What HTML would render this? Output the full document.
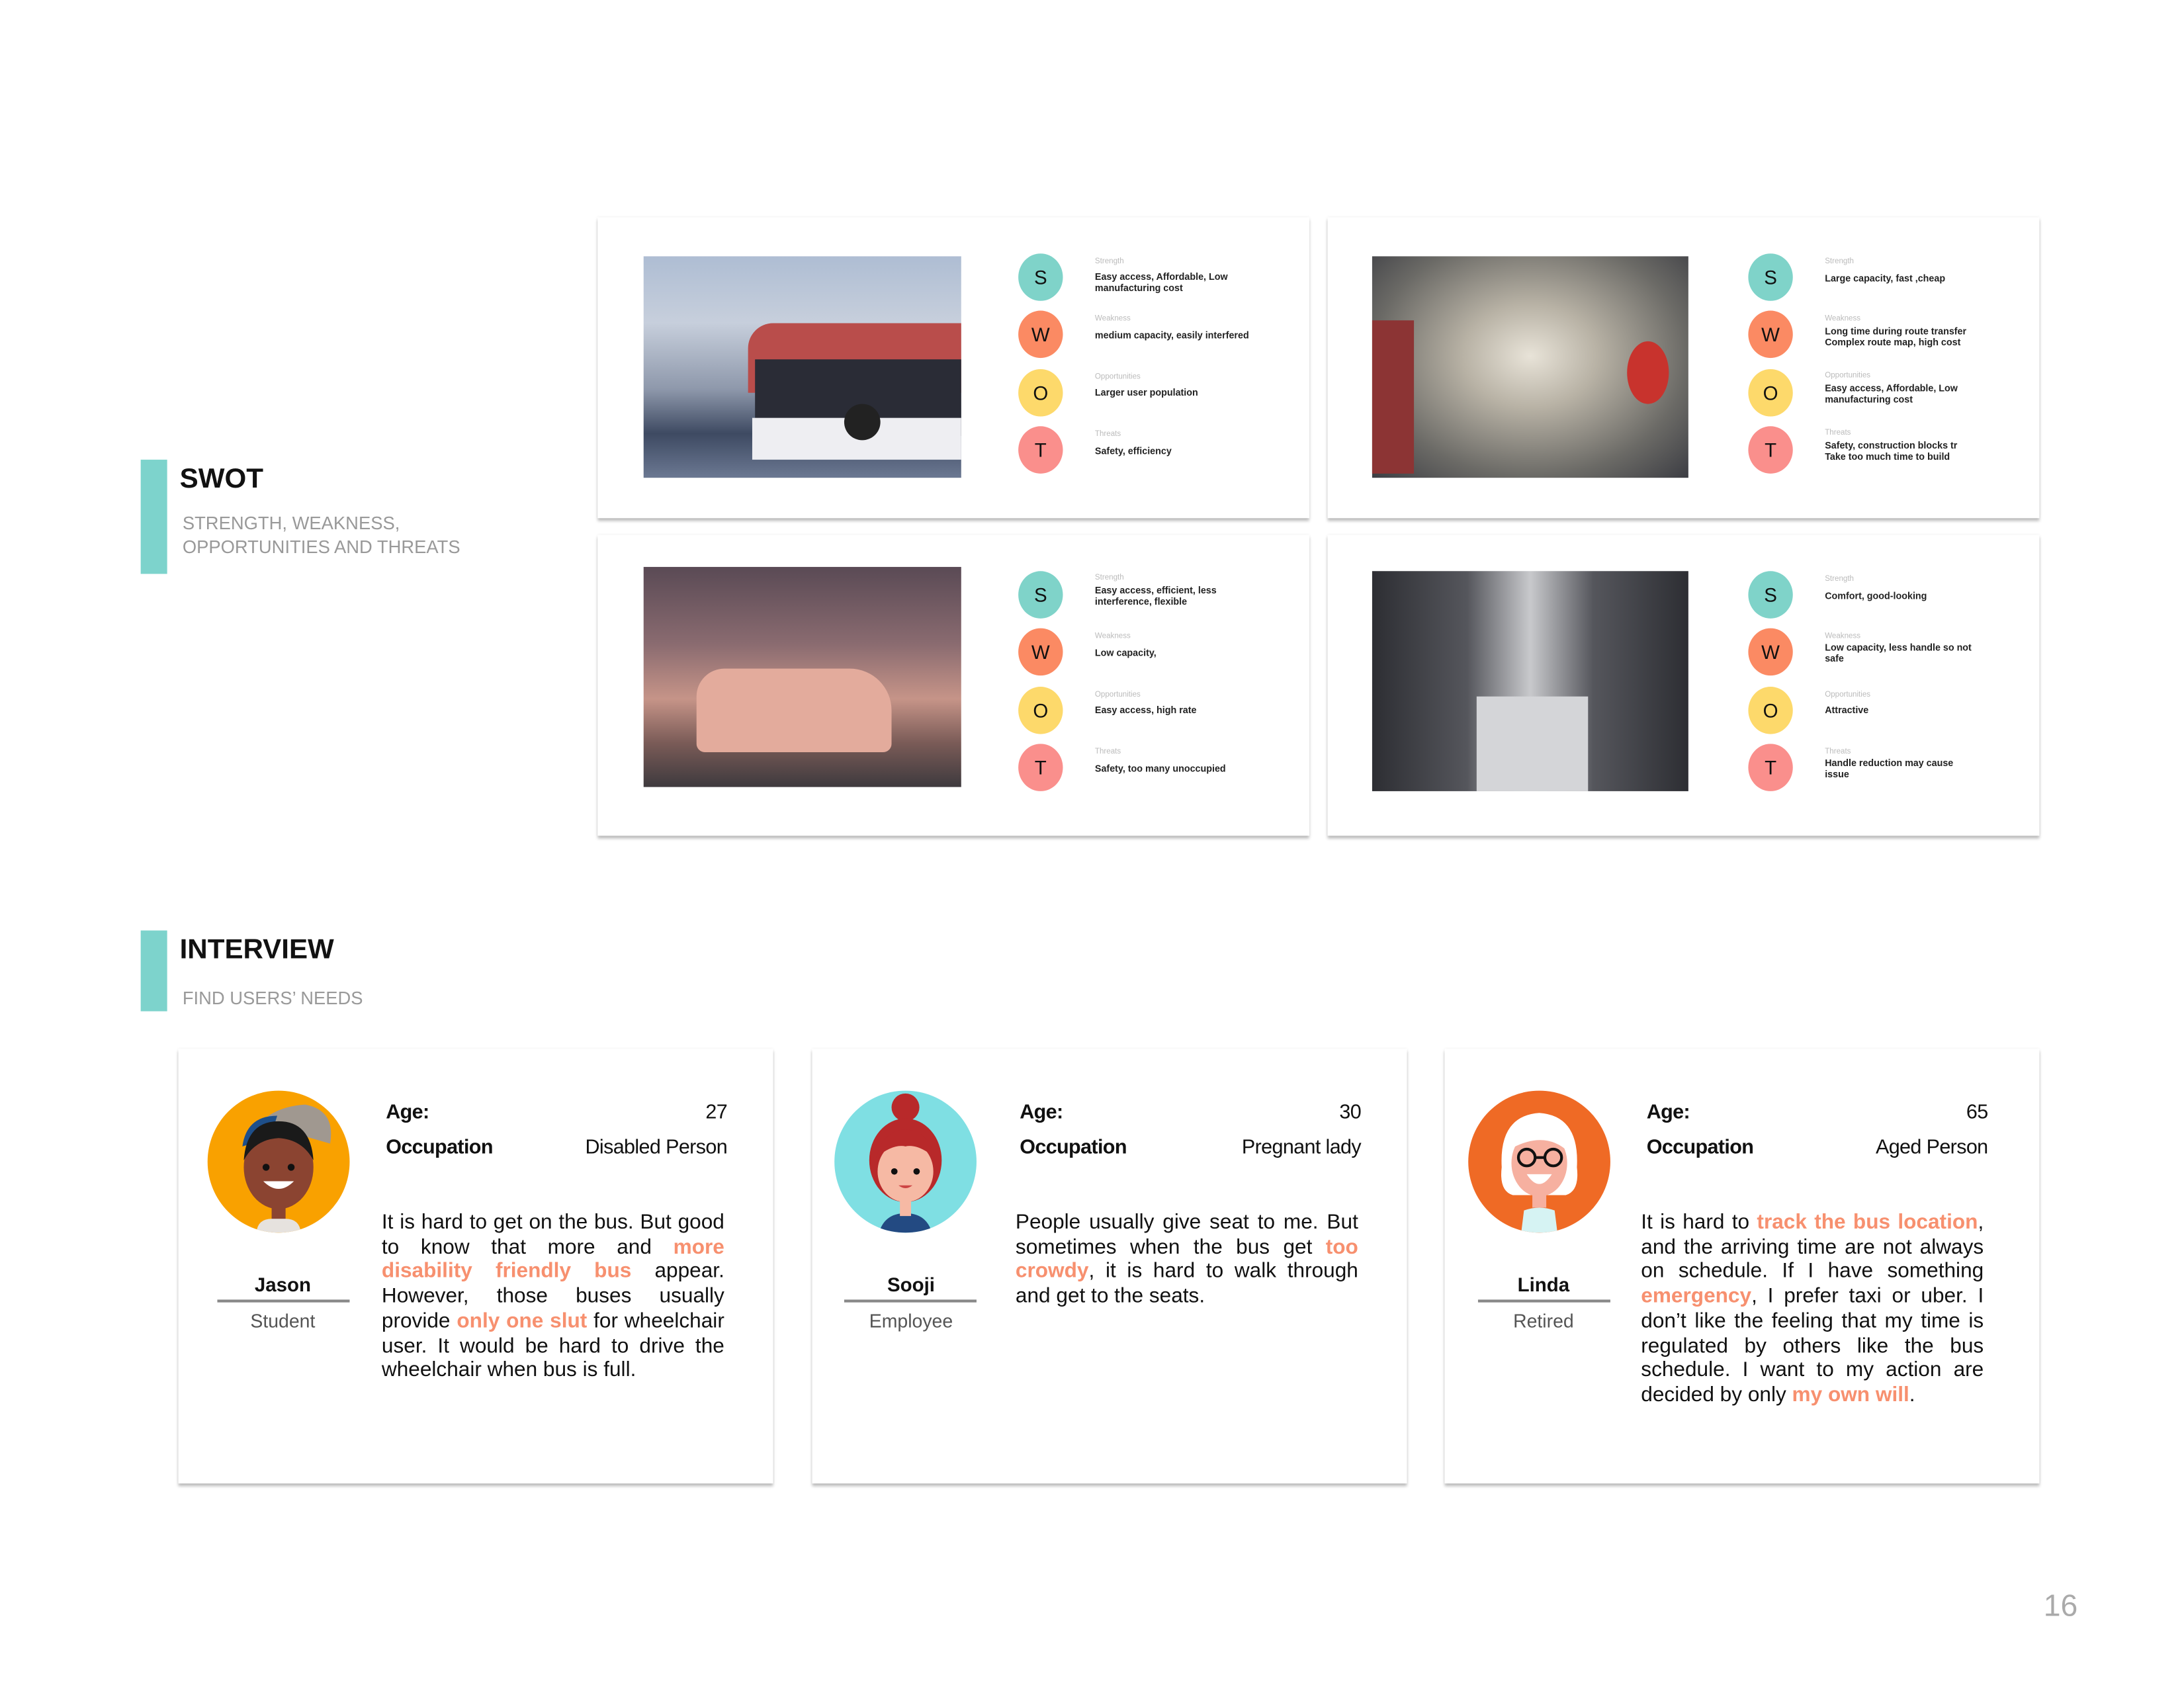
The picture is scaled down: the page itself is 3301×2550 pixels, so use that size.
<!DOCTYPE html>
<html><head><meta charset="utf-8"><style>
html,body{margin:0;padding:0;background:#fff;}
body{width:3301px;height:2550px;overflow:hidden;position:relative;}
#w{position:absolute;left:0;top:0;width:1568px;height:1211px;transform:scale(2.1055);transform-origin:0 0;font-family:"Liberation Sans",sans-serif;}
.a{position:absolute;}
.bar{position:absolute;width:19px;background:#7dd3cc;}
.h{position:absolute;font-weight:bold;font-size:20px;color:#111;}
.sub{position:absolute;font-size:13px;color:#999;line-height:17px;}
.card{position:absolute;background:#fff;box-shadow:0 2px 2px rgba(0,0,0,.25),0 0 2px rgba(0,0,0,.08);}
.c{position:absolute;width:32px;height:34px;border-radius:50%;font-size:14px;text-align:center;line-height:34px;color:#111;}
.lb{position:absolute;font-size:5.5px;color:#bbb;}
.tx{position:absolute;font-size:6.8px;font-weight:bold;color:#222;line-height:8px;}
.av{position:absolute;width:102px;height:102px;border-radius:50%;overflow:hidden;}
.nm{position:absolute;width:96px;text-align:center;font-weight:bold;font-size:14px;color:#111;}
.ln{position:absolute;width:95px;height:2px;background:#888;}
.ro{position:absolute;width:96px;text-align:center;font-size:13.5px;color:#555;}
.k{position:absolute;font-weight:bold;font-size:14.5px;color:#111;letter-spacing:-0.3px;}
.v{position:absolute;font-size:14.5px;color:#111;text-align:right;letter-spacing:-0.3px;}
.p{position:absolute;width:246px;font-size:15px;line-height:17.7px;color:#111;text-align:justify;}
.o{color:#f7906f;font-weight:bold;}
</style></head><body><div id="w">

<div class="bar" style="left:101px;top:330px;height:82px"></div>
<div class="h" style="left:129px;top:333px">SWOT</div>
<div class="sub" style="left:131px;top:367px">STRENGTH, WEAKNESS,<br>OPPORTUNITIES AND THREATS</div>

<div class="card" style="left:429px;top:156px;width:511px;height:216px"></div>
<div class="a" style="left:462px;top:184px;width:228px;height:159px;background:linear-gradient(180deg,#aebdd3 0%,#c7cfdc 30%,#8e98ab 60%,#3e4a62 80%,#6b7892 100%)"></div>
<div class="a" style="left:537px;top:232px;width:153px;height:50px;background:#b94d4b;border-radius:18px 0 0 0"></div>
<div class="a" style="left:542px;top:258px;width:148px;height:55px;background:#2a2c36"></div>
<div class="a" style="left:540px;top:300px;width:150px;height:30px;background:#eeeef2"></div>
<div class="a" style="left:606px;top:290px;width:26px;height:26px;border-radius:50%;background:#222"></div>
<div class="card" style="left:953px;top:156px;width:511px;height:216px"></div>
<div class="a" style="left:985px;top:184px;width:227px;height:159px;background:radial-gradient(ellipse at 50% 45%,#e8e3d8 0%,#b8b2a5 30%,#6b6a66 70%,#3c3d43 100%)"></div>
<div class="a" style="left:985px;top:230px;width:30px;height:110px;background:#8c3434"></div>
<div class="a" style="left:1168px;top:245px;width:30px;height:45px;border-radius:50%;background:#c8332d"></div>
<div class="card" style="left:429px;top:384px;width:511px;height:216px"></div>
<div class="a" style="left:462px;top:407px;width:228px;height:158px;background:linear-gradient(180deg,#5a4a55 0%,#8a6b70 35%,#c69488 60%,#7a5b57 80%,#3e3a3e 100%)"></div>
<div class="a" style="left:500px;top:480px;width:140px;height:60px;border-radius:20px 30px 6px 6px;background:#e3ab9c"></div>
<div class="card" style="left:953px;top:384px;width:511px;height:216px"></div>
<div class="a" style="left:985px;top:410px;width:227px;height:158px;background:linear-gradient(90deg,#2d2e33 0%,#55565c 30%,#c8c9cc 50%,#55565c 70%,#2d2e33 100%)"></div>
<div class="a" style="left:1060px;top:500px;width:80px;height:68px;background:#d4d5d8"></div>

<div class="c" style="left:731px;top:182px;background:#7fd3c9">S</div>
<div class="c" style="left:731px;top:223px;background:#fb8a63">W</div>
<div class="c" style="left:731px;top:265px;background:#fdd96b">O</div>
<div class="c" style="left:731px;top:306px;background:#fa8f8c">T</div>
<div class="lb" style="left:786px;top:185px">Strength</div>
<div class="tx" style="left:786px;top:196px">Easy access, Affordable, Low<br>manufacturing cost</div>
<div class="lb" style="left:786px;top:226px">Weakness</div>
<div class="tx" style="left:786px;top:238px">medium capacity, easily interfered</div>
<div class="lb" style="left:786px;top:268px">Opportunities</div>
<div class="tx" style="left:786px;top:279px">Larger user population</div>
<div class="lb" style="left:786px;top:309px">Threats</div>
<div class="tx" style="left:786px;top:321px">Safety, efficiency</div>

<div class="c" style="left:1255px;top:182px;background:#7fd3c9">S</div>
<div class="c" style="left:1255px;top:223px;background:#fb8a63">W</div>
<div class="c" style="left:1255px;top:265px;background:#fdd96b">O</div>
<div class="c" style="left:1255px;top:306px;background:#fa8f8c">T</div>
<div class="lb" style="left:1310px;top:185px">Strength</div>
<div class="tx" style="left:1310px;top:197px">Large capacity, fast ,cheap</div>
<div class="lb" style="left:1310px;top:226px">Weakness</div>
<div class="tx" style="left:1310px;top:235px">Long time during route transfer<br>Complex route map, high cost</div>
<div class="lb" style="left:1310px;top:267px">Opportunities</div>
<div class="tx" style="left:1310px;top:276px">Easy access, Affordable, Low<br>manufacturing cost</div>
<div class="lb" style="left:1310px;top:308px">Threats</div>
<div class="tx" style="left:1310px;top:317px">Safety, construction blocks tr<br>Take too much time to build</div>

<div class="c" style="left:731px;top:410px;background:#7fd3c9">S</div>
<div class="c" style="left:731px;top:451px;background:#fb8a63">W</div>
<div class="c" style="left:731px;top:493px;background:#fdd96b">O</div>
<div class="c" style="left:731px;top:534px;background:#fa8f8c">T</div>
<div class="lb" style="left:786px;top:412px">Strength</div>
<div class="tx" style="left:786px;top:421px">Easy access, efficient, less<br>interference, flexible</div>
<div class="lb" style="left:786px;top:454px">Weakness</div>
<div class="tx" style="left:786px;top:466px">Low capacity,</div>
<div class="lb" style="left:786px;top:496px">Opportunities</div>
<div class="tx" style="left:786px;top:507px">Easy access, high rate</div>
<div class="lb" style="left:786px;top:537px">Threats</div>
<div class="tx" style="left:786px;top:549px">Safety, too many unoccupied</div>

<div class="c" style="left:1255px;top:410px;background:#7fd3c9">S</div>
<div class="c" style="left:1255px;top:451px;background:#fb8a63">W</div>
<div class="c" style="left:1255px;top:493px;background:#fdd96b">O</div>
<div class="c" style="left:1255px;top:534px;background:#fa8f8c">T</div>
<div class="lb" style="left:1310px;top:413px">Strength</div>
<div class="tx" style="left:1310px;top:425px">Comfort, good-looking</div>
<div class="lb" style="left:1310px;top:454px">Weakness</div>
<div class="tx" style="left:1310px;top:462px">Low capacity, less handle so not<br>safe</div>
<div class="lb" style="left:1310px;top:496px">Opportunities</div>
<div class="tx" style="left:1310px;top:507px">Attractive</div>
<div class="lb" style="left:1310px;top:537px">Threats</div>
<div class="tx" style="left:1310px;top:545px">Handle reduction may cause<br>issue</div>

<div class="bar" style="left:101px;top:668px;height:58px"></div>
<div class="h" style="left:129px;top:671px">INTERVIEW</div>
<div class="sub" style="left:131px;top:708px">FIND USERS’ NEEDS</div>

<div class="card" style="left:128px;top:753px;width:427px;height:312px"></div>
<div class="card" style="left:583px;top:753px;width:427px;height:312px"></div>
<div class="card" style="left:1037px;top:753px;width:427px;height:312px"></div>

<div class="av" style="left:149px;top:783px;background:#f9a100">
 <svg width="102" height="102" viewBox="0 0 102 102"><path d="M30 35 Q40 12 70 10 Q92 14 88 38 L60 30 Z" fill="#a09890"/><path d="M25 40 Q28 18 50 18 L45 34Z" fill="#1e4f8a"/><ellipse cx="51" cy="55" rx="25" ry="30" fill="#8b4431"/><path d="M26 50 Q28 22 51 22 Q74 22 76 50 Q68 35 51 34 Q34 35 26 50Z" fill="#1a1a1a"/><circle cx="42" cy="55" r="2.5" fill="#111"/><circle cx="60" cy="55" r="2.5" fill="#111"/><path d="M40 65 Q51 76 62 65Z" fill="#fff"/><rect x="46" y="82" width="10" height="14" fill="#8b4431"/><path d="M35 102 Q36 92 46 92 L56 92 Q66 92 67 102Z" fill="#e6e2de"/></svg>
</div>
<div class="nm" style="left:155px;top:914px">Jason</div>
<div class="ln" style="left:156px;top:933px"></div>
<div class="ro" style="left:155px;top:941px">Student</div>
<div class="k" style="left:277px;top:791px">Age:</div>
<div class="v" style="left:400px;top:791px;width:122px">27</div>
<div class="k" style="left:277px;top:816px">Occupation</div>
<div class="v" style="left:380px;top:816px;width:142px">Disabled Person</div>
<div class="p" style="left:274px;top:869px">It is hard to get on the bus. But good to know that more and <span class="o">more disability friendly bus</span> appear. However, those buses usually provide <span class="o">only one slut</span> for wheelchair user. It would be hard to drive the wheelchair when bus is full.</div>

<div class="av" style="left:599px;top:783px;background:#7fdfe3">
 <svg width="102" height="102" viewBox="0 0 102 102"><circle cx="51" cy="12" r="10" fill="#b8292a"/><ellipse cx="51" cy="50" rx="26" ry="30" fill="#b8292a"/><ellipse cx="51" cy="58" rx="20" ry="22" fill="#f6b9a4"/><path d="M30 48 Q35 28 51 28 Q67 28 72 48 Q60 38 51 40 Q42 38 30 48Z" fill="#b8292a"/><circle cx="43" cy="58" r="2.3" fill="#111"/><circle cx="59" cy="58" r="2.3" fill="#111"/><path d="M46 68 Q51 72 56 68Z" fill="#c44"/><path d="M32 102 Q36 88 51 88 Q66 88 70 102Z" fill="#234a82"/><rect x="47" y="78" width="8" height="12" fill="#f6b9a4"/></svg>
</div>
<div class="nm" style="left:606px;top:914px">Sooji</div>
<div class="ln" style="left:606px;top:933px"></div>
<div class="ro" style="left:606px;top:941px">Employee</div>
<div class="k" style="left:732px;top:791px">Age:</div>
<div class="v" style="left:855px;top:791px;width:122px">30</div>
<div class="k" style="left:732px;top:816px">Occupation</div>
<div class="v" style="left:835px;top:816px;width:142px">Pregnant lady</div>
<div class="p" style="left:729px;top:869px">People usually give seat to me. But sometimes when the bus get <span class="o">too crowdy</span>, it is hard to walk through and get to the seats.</div>

<div class="av" style="left:1054px;top:783px;background:#ef6a25">
 <svg width="102" height="102" viewBox="0 0 102 102"><path d="M24 55 Q22 18 51 16 Q80 18 78 55 Q80 72 70 75 L32 75 Q22 72 24 55Z" fill="#fff"/><ellipse cx="51" cy="52" rx="20" ry="24" fill="#f6b0a0"/><path d="M30 42 Q40 20 68 30 Q72 38 72 44 Q55 28 30 42Z" fill="#fff"/><circle cx="42" cy="48" r="6" fill="none" stroke="#111" stroke-width="2"/><circle cx="61" cy="48" r="6" fill="none" stroke="#111" stroke-width="2"/><path d="M48 48 L55 48" stroke="#111" stroke-width="2"/><path d="M42 60 Q51 74 60 60Z" fill="#fff"/><rect x="46" y="72" width="10" height="12" fill="#f6b0a0"/><path d="M38 102 L40 86 Q51 82 62 86 L64 102Z" fill="#d6f3f3"/></svg>
</div>
<div class="nm" style="left:1060px;top:914px">Linda</div>
<div class="ln" style="left:1061px;top:933px"></div>
<div class="ro" style="left:1060px;top:941px">Retired</div>
<div class="k" style="left:1182px;top:791px">Age:</div>
<div class="v" style="left:1305px;top:791px;width:122px">65</div>
<div class="k" style="left:1182px;top:816px">Occupation</div>
<div class="v" style="left:1285px;top:816px;width:142px">Aged Person</div>
<div class="p" style="left:1178px;top:869px">It is hard to <span class="o">track the bus location</span>, and the arriving time are not always on schedule. If I have something <span class="o">emergency</span>, I prefer taxi or uber. I don’t like the feeling that my time is regulated by others like the bus schedule. I want to my action are decided by only <span class="o">my own will</span>.</div>

<div class="a" style="left:1467px;top:1140px;font-size:22px;color:#aaa">16</div>
</div></body></html>
